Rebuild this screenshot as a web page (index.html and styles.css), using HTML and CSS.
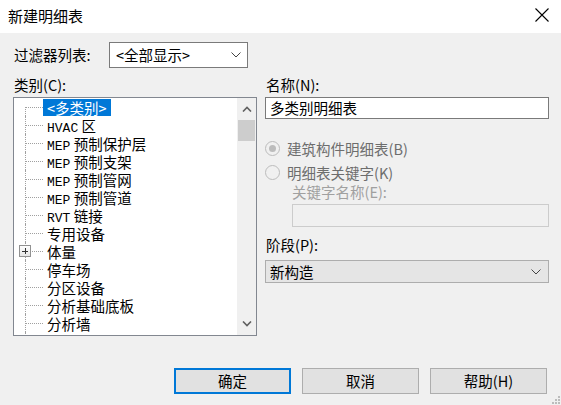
FILE: index.html
```html
<!DOCTYPE html>
<html lang="zh-CN">
<head>
    <meta charset="UTF-8">
    <meta name="viewport" content="width=device-width, initial-scale=1.0">
    <title>新建明细表</title>
    <link rel="stylesheet" href="styles.css">
</head>
<body>
<div class="dialog">
    <!-- 标题栏 -->
    <div class="titlebar">
        <span class="title">新建明细表</span>
        <svg class="close" width="14" height="14" viewBox="0 0 14 14">
            <path d="M0.5 0.5 L13.5 13.5 M13.5 0.5 L0.5 13.5" stroke="#000" stroke-width="1.1" fill="none"/>
        </svg>
    </div>

    <div class="content">
        <div class="filter">
            <span class="filter-label">过滤器列表:</span>
            <div class="combo">
                <span>&lt;全部显示&gt;</span>
                <svg width="10" height="6" viewBox="0 0 10 6"><path d="M0.5 0.5 L5 5 L9.5 0.5" stroke="#444" fill="none"/></svg>
            </div>
        </div>

        <div class="main">
            <!-- 左: 类别 -->
            <div class="left">
                <div class="label">类别(C):</div>
                <div class="list">
                    <ul class="tree">
                        <li class="row first"><span class="branch"></span><span class="item selected">&lt;多类别&gt;</span></li>
                        <li class="row"><span class="branch"></span><span class="item"><span class="en">HVAC</span> 区</span></li>
                        <li class="row"><span class="branch"></span><span class="item"><span class="en">MEP</span> 预制保护层</span></li>
                        <li class="row"><span class="branch"></span><span class="item"><span class="en">MEP</span> 预制支架</span></li>
                        <li class="row"><span class="branch"></span><span class="item"><span class="en">MEP</span> 预制管网</span></li>
                        <li class="row"><span class="branch"></span><span class="item"><span class="en">MEP</span> 预制管道</span></li>
                        <li class="row"><span class="branch"></span><span class="item"><span class="en">RVT</span> 链接</span></li>
                        <li class="row"><span class="branch"></span><span class="item">专用设备</span></li>
                        <li class="row"><span class="branch"><span class="plus"></span></span><span class="item">体量</span></li>
                        <li class="row"><span class="branch"></span><span class="item">停车场</span></li>
                        <li class="row"><span class="branch"></span><span class="item">分区设备</span></li>
                        <li class="row"><span class="branch"></span><span class="item">分析基础底板</span></li>
                        <li class="row"><span class="branch"></span><span class="item">分析墙</span></li>
                        <li class="row"><span class="branch"></span><span class="item">分析楼层</span></li>
                    </ul>
                    <div class="scrollbar">
                        <div class="arrow">
                            <svg width="10" height="6" viewBox="0 0 10 6"><path d="M1 5.5 L5 1.5 L9 5.5" stroke="#606060" stroke-width="1.6" fill="none"/></svg>
                        </div>
                        <div class="thumb"></div>
                        <div class="track"></div>
                        <div class="arrow">
                            <svg width="10" height="6" viewBox="0 0 10 6"><path d="M1 0.5 L5 4.5 L9 0.5" stroke="#606060" stroke-width="1.6" fill="none"/></svg>
                        </div>
                    </div>
                </div>
            </div>

            <!-- 右: 名称, 类型, 阶段 -->
            <div class="right">
                <div class="label">名称(N):</div>
                <div class="input">多类别明细表</div>

                <div class="radios">
                    <div class="radio-row">
                        <span class="radio checked"></span>
                        <span>建筑构件明细表(B)</span>
                    </div>
                    <div class="radio-row">
                        <span class="radio"></span>
                        <span>明细表关键字(K)</span>
                    </div>
                    <div class="key-label">关键字名称(E):</div>
                    <div class="input disabled"></div>
                </div>

                <div class="label phase-label">阶段(P):</div>
                <div class="combo phase">
                    <span>新构造</span>
                    <svg width="10" height="6" viewBox="0 0 10 6"><path d="M0.5 0.5 L5 5 L9.5 0.5" stroke="#444" fill="none"/></svg>
                </div>
            </div>
        </div>

        <div class="buttons">
            <button class="btn default">确定</button>
            <button class="btn">取消</button>
            <button class="btn">帮助(H)</button>
        </div>
    </div>

    <svg class="grip" width="9" height="9" viewBox="0 0 9 9">
        <rect x="7" y="1" width="2" height="2" fill="#bcbcbc"/>
        <rect x="4" y="4" width="2" height="2" fill="#bcbcbc"/>
        <rect x="7" y="4" width="2" height="2" fill="#bcbcbc"/>
        <rect x="1" y="7" width="2" height="2" fill="#bcbcbc"/>
        <rect x="4" y="7" width="2" height="2" fill="#bcbcbc"/>
        <rect x="7" y="7" width="2" height="2" fill="#bcbcbc"/>
    </svg>
</div>
</body>
</html>
```

FILE: styles.css
```css
/* 기본 */
* {margin:0; padding:0; box-sizing:border-box;}
body {
    width:561px; height:405px; overflow:hidden;
    background-color:#f0f0f0;
    font-family:"Noto Sans CJK SC", sans-serif;
    font-size:14.5px; color:#000;
}
.dialog {position:relative; width:561px; height:405px;}

/* 标题栏 */
.titlebar {
    height:33px; background-color:#fff;
    display:flex; align-items:center; justify-content:space-between;
    padding:0 12px 0 8px;
}
.title {font-size:15px; line-height:20px; margin-top:-2px;}
.close {margin-top:-4px;}

.content {padding:9px 12px 0 13px;}

/* 过滤器 */
.filter {display:flex; align-items:center; height:26px;}
.filter-label {width:96px; padding-left:1px; line-height:20px;}
.combo {
    width:139px; height:26px;
    background-color:#fff; border:1px solid #7a7a7a;
    display:flex; align-items:center; justify-content:space-between;
    padding:0 6px 0 6px; line-height:20px;
}

.main {
    display:grid; grid-template-columns:244px 1fr; column-gap:8px;
    margin-top:8px;
}
.label {height:21px; line-height:18px; padding-left:1px;}

/* 类别列表 */
.list {
    height:239px; display:flex;
    background-color:#fff; border:1px solid #828790;
    overflow:hidden;
}
.tree {flex:1; list-style:none; overflow:hidden;}
.row {height:18px; display:flex; align-items:center;}
.branch {
    position:relative;
    width:18px; height:18px; flex:none; margin-left:11px;
    border-left:1px dotted #a0a0a0;
    display:flex; align-items:center;
}
.branch::after {content:''; display:block; width:17px; border-top:1px dotted #a0a0a0;}
.first .branch {height:9px; align-self:flex-end; align-items:flex-start;}
.plus {
    position:absolute; left:-7px; top:3px;
    width:12px; height:12px;
    border:1px solid #919191;
    background:linear-gradient(#ffffff, #e6e6e6);
}
.plus::before {content:''; position:absolute; left:2px; top:4.5px; width:6px; height:1px; background-color:#333;}
.plus::after {content:''; position:absolute; left:4.5px; top:2px; width:1px; height:6px; background-color:#333;}
.item {height:17px; line-height:17px; padding:0 4px; white-space:nowrap;}
.item.selected {background-color:#0078d7; color:#fff;}
.en {font-family:"Liberation Mono", monospace; font-size:13px;}

.scrollbar {width:19px; flex:none; background-color:#f0f0f0; display:flex; flex-direction:column;}
.arrow {height:22px; display:flex; align-items:center; justify-content:center;}
.thumb {height:21px; margin:0 1px; background-color:#cdcdcd;}
.track {flex:1;}

/* 右侧 */
.input {
    height:22px; background-color:#fff; border:1px solid #7a7a7a;
    padding:0 4px; line-height:20px;
}
.radios {margin-top:17px;}
.radio-row {display:flex; align-items:center; height:24px; color:#6d6d6d;}
.radio {
    width:15px; height:15px; border-radius:50%;
    border:1px solid #bcbcbc; background-color:#f0f0f0;
    margin-right:7px; position:relative;
}
.radio.checked::after {
    content:''; position:absolute; left:3px; top:3px;
    width:7px; height:7px; border-radius:50%; background-color:#bcbcbc;
}
.key-label {padding-left:27px; height:20px; line-height:16px; color:#a0a0a0;}
.input.disabled {margin-left:27px; height:23px; background-color:#f0f0f0; border-color:#cccccc;}

.phase-label {margin-top:9px; height:24px;}
.combo.phase {width:auto; height:23px; background-color:#e5e5e5; border-color:#adadad; padding:0 7px 0 4px;}

/* 按钮 */
.buttons {display:flex; justify-content:flex-end; gap:11px; margin-top:32px; padding-right:2px;}
.btn {
    width:117px; height:26px;
    font-family:"Noto Sans CJK SC", sans-serif; font-size:14.5px; line-height:20px;
    background-color:#e1e1e1; border:1px solid #adadad; color:#000;
}
.btn.default {border:2px solid #0078d7;}

.grip {position:absolute; right:1px; bottom:1px;}
```
